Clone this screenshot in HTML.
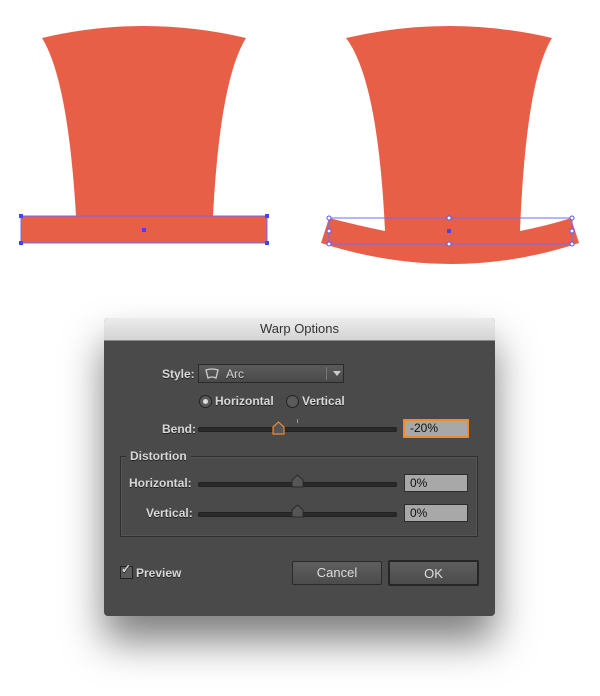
<!DOCTYPE html>
<html><head><style>
body{margin:0;width:600px;height:696px;background:#fff;position:relative;overflow:hidden;font-family:"Liberation Sans",sans-serif}
.a{position:absolute}
.t{position:absolute;color:#d8d8d8;font-size:12px;font-weight:bold;text-shadow:0 1px 0 #222}
.slider{position:absolute;height:3px;background:#2a2a2a;border:1px solid #222;border-radius:2px}
.inp{position:absolute;background:#a8a8a8;border:1px solid #2c2c2c;color:#111;font-size:12px;line-height:17px;padding-left:5px;box-sizing:border-box}
.btn{position:absolute;border:1px solid #2a2a2a;border-radius:2px;background:linear-gradient(#5e5e5e,#4c4c4c);color:#ddd;font-size:13px;text-align:center;box-sizing:border-box}
</style></head><body>
<svg class="a" style="left:0;top:0" width="600" height="290">
<path d="M42 38 Q144 14 246 38 Q220 80 213 216 L76 216 Q68 80 42 38Z" fill="#e85f48"/>
<rect x="21" y="216" width="246" height="27" fill="#e85f48"/>
<rect x="21" y="216" width="246" height="27" fill="none" stroke="#6d6dff" stroke-width="1"/>
<g fill="#4444ff"><rect x="19" y="214" width="4" height="4"/><rect x="265" y="214" width="4" height="4"/><rect x="19" y="241" width="4" height="4"/><rect x="265" y="241" width="4" height="4"/><rect x="142" y="228" width="4" height="4"/></g>
<path d="M346 38 Q449 14 552 38 Q526 80 520 231 Q550 225 571 218 L579 243 Q452 285 321 243 L329 218 Q360 226 385 231 Q378 80 346 38Z" fill="#e85f48"/>
<rect x="329" y="218" width="243" height="26" fill="none" stroke="#6d6dff"/>
<g fill="#fff" stroke="#5555ff"><circle cx="329" cy="218" r="2"/><circle cx="449" cy="218" r="2"/><circle cx="572" cy="218" r="2"/><circle cx="329" cy="231" r="2"/><circle cx="572" cy="231" r="2"/><circle cx="329" cy="244" r="2"/><circle cx="449" cy="244" r="2"/><circle cx="572" cy="244" r="2"/></g>
<rect x="447" y="229" width="4" height="4" fill="#4444ff"/>
</svg>
<div class="a" style="left:104px;top:318px;width:391px;height:298px;background:#4a4a4a;border-radius:4px;box-shadow:0 25px 40px rgba(0,0,0,.5);overflow:hidden">
<div class="a" style="left:0;top:0;width:391px;height:22px;background:linear-gradient(#ececec,#d4d4d4);border-bottom:1px solid #888;text-align:center;font-size:13px;line-height:22px;color:#333">Warp Options</div>
</div>
<div class="t" style="left:162px;top:367px">Style:</div>
<div class="a" style="left:198px;top:364px;width:146px;height:19px;box-sizing:border-box;border:1px solid #2a2a2a;background:linear-gradient(#5a5a5a,#4a4a4a)"></div>
<svg class="a" style="left:204px;top:368px" width="16" height="12"><path d="M2 2 Q8 0 14 2 L12 10 Q8 8 4 10Z" fill="none" stroke="#ccc" stroke-width="1.3"/></svg>
<div class="t" style="left:226px;top:367px;font-weight:normal">Arc</div>
<div class="a" style="left:326px;top:367px;width:1px;height:13px;background:#777"></div>
<div class="a" style="left:333px;top:371px;width:0;height:0;border-left:4px solid transparent;border-right:4px solid transparent;border-top:5px solid #ccc"></div>
<div class="a" style="left:199px;top:395px;width:11px;height:11px;border-radius:50%;border:1px solid #222;background:#5a5a5a"></div>
<div class="a" style="left:203px;top:399px;width:5px;height:5px;border-radius:50%;background:#ddd"></div>
<div class="t" style="left:215px;top:394px">Horizontal</div>
<div class="a" style="left:286px;top:395px;width:11px;height:11px;border-radius:50%;border:1px solid #222;background:#5a5a5a"></div>
<div class="t" style="left:302px;top:394px">Vertical</div>
<div class="t" style="left:162px;top:422px">Bend:</div>
<div class="slider" style="left:198px;top:427px;width:197px"></div>
<div class="a" style="left:297px;top:419px;width:1px;height:4px;background:#999"></div>
<svg class="a" style="left:272px;top:421px" width="13" height="14"><path d="M1 6 L6.5 1 L12 6 L12 13 L1 13Z" fill="#555" stroke="#f08a2a" stroke-width="1.2"/></svg>
<div class="inp" style="left:403px;top:419px;width:66px;height:19px;border:2px solid #f08a2a;line-height:15px">-20%</div>
<div class="a" style="left:120px;top:456px;width:358px;height:81px;border:1px solid #2e2e2e;box-shadow:inset 0 0 0 1px #555;box-sizing:border-box"></div>
<div class="t" style="left:126px;top:449px;background:#4a4a4a;padding:0 4px">Distortion</div>
<div class="t" style="left:129px;top:476px">Horizontal:</div>
<div class="slider" style="left:198px;top:482px;width:197px"></div>
<svg class="a" style="left:291px;top:474px" width="13" height="14"><path d="M1 6 L6.5 1 L12 6 L12 13 L1 13Z" fill="#555" stroke="#2a2a2a"/></svg>
<div class="inp" style="left:404px;top:474px;width:64px;height:18px">0%</div>
<div class="t" style="left:146px;top:506px">Vertical:</div>
<div class="slider" style="left:198px;top:512px;width:197px"></div>
<svg class="a" style="left:291px;top:504px" width="13" height="14"><path d="M1 6 L6.5 1 L12 6 L12 13 L1 13Z" fill="#555" stroke="#2a2a2a"/></svg>
<div class="inp" style="left:404px;top:504px;width:64px;height:18px">0%</div>
<div class="a" style="left:120px;top:566px;width:11px;height:11px;border:1px solid #222;background:#5a5a5a"></div>
<div class="t" style="left:121px;top:562px;font-size:12px">✓</div>
<div class="t" style="left:136px;top:566px">Preview</div>
<div class="btn" style="left:292px;top:561px;width:90px;height:24px;line-height:22px">Cancel</div>
<div class="btn" style="left:388px;top:560px;width:91px;height:26px;line-height:24px;border:2px solid #262626">OK</div>
</body></html>
